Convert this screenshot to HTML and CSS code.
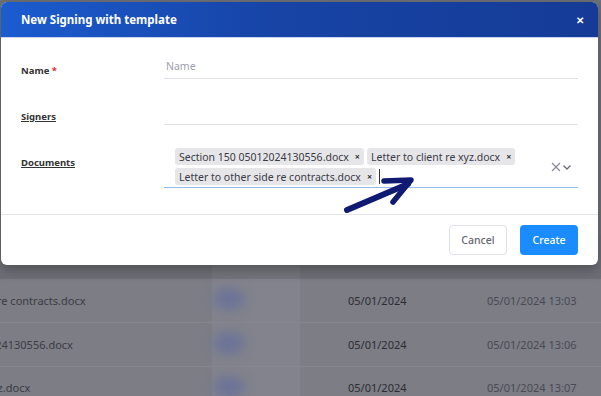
FILE: index.html
```html
<!DOCTYPE html>
<html lang="en">

<head>
    <meta charset="UTF-8">
    <title>New Signing with template</title>
    <link rel="stylesheet" href="styles.css">
</head>

<body>

    <!-- page behind the dialog -->
    <div class="backdrop">
        <div class="table">
            <div class="row head">
                <div class="cell"></div>
                <div class="cell blur"></div>
                <div class="cell"></div>
                <div class="cell"></div>
            </div>
            <div class="row">
                <div class="cell name">Letter to other side re contracts.docx</div>
                <div class="cell blur"><span class="blob"></span></div>
                <div class="cell date">05/01/2024</div>
                <div class="cell stamp">05/01/2024 13:03</div>
            </div>
            <div class="row">
                <div class="cell name">Section 150 05012024130556.docx</div>
                <div class="cell blur"><span class="blob"></span></div>
                <div class="cell date">05/01/2024</div>
                <div class="cell stamp">05/01/2024 13:06</div>
            </div>
            <div class="row">
                <div class="cell name">Letter to client re xyz.docx</div>
                <div class="cell blur"><span class="blob"></span></div>
                <div class="cell date">05/01/2024</div>
                <div class="cell stamp">05/01/2024 13:07</div>
            </div>
        </div>
    </div>

    <!-- Modal -->
    <div class="modal">
        <div class="modal-header">
            <h2>New Signing with template</h2>
            <span class="close">&#x2715;</span>
        </div>

        <div class="modal-body">
            <div class="field">
                <label>Name <span class="req">*</span></label>
                <div class="control">
                    <input type="text" placeholder="Name">
                </div>
            </div>

            <div class="field">
                <label class="link">Signers</label>
                <div class="control"></div>
            </div>

            <div class="field">
                <label class="link">Documents</label>
                <div class="control select">
                    <div class="chips">
                        <span class="chip">Section 150 05012024130556.docx <b>&times;</b></span>
                        <span class="chip">Letter to client re xyz.docx <b>&times;</b></span>
                        <span class="chip">Letter to other side re contracts.docx <b>&times;</b></span>
                        <span class="caret"></span>
                    </div>
                    <div class="select-icons">
                        <svg width="10" height="10" viewBox="0 0 10 10"><path d="M1 1L9 9M9 1L1 9" stroke="#8a8a95" stroke-width="1.1" fill="none"/></svg>
                        <svg width="10" height="10" viewBox="0 0 10 10"><path d="M1.5 3.5L5 7L8.5 3.5" stroke="#6b6b78" stroke-width="1.3" fill="none"/></svg>
                    </div>
                </div>
            </div>

            <svg class="arrow" width="80" height="46" viewBox="0 0 80 46">
                <path d="M7 36L68 10" stroke="#0f1a72" stroke-width="6" stroke-linecap="round" fill="none"/>
                <path d="M44 7L71 6L53 28" stroke="#0f1a72" stroke-width="5.5" stroke-linecap="round" stroke-linejoin="round" fill="none"/>
            </svg>
        </div>

        <div class="modal-footer">
            <button class="btn cancel">Cancel</button>
            <button class="btn create">Create</button>
        </div>
    </div>

</body>

</html>
```

FILE: styles.css
```css
* {
    margin: 0;
    padding: 0;
    box-sizing: border-box;
}

body {
    font-family: 'Noto Sans', 'Liberation Sans', sans-serif;
    background-color: #707178;
    width: 601px;
    height: 396px;
    overflow: hidden;
    position: relative;
}

/* Page behind */
.backdrop {
    padding-top: 235px;
    margin-left: -105px;
}

.row {
    display: grid;
    grid-template-columns: 317px 136px 139px 1fr;
    height: 44px;
    align-items: center;
    background-color: #7c7d85;
    border-bottom: 1px solid #86878e;
    font-size: 11px;
}

.row:last-child {
    height: 42px;
}

.row.head {
    background-color: #6e6f76;
    border-bottom: none;
}

.cell {
    height: 100%;
    display: flex;
    align-items: center;
    white-space: nowrap;
}

.name {
    color: #3b3c44;
}

.blur {
    position: relative;
    background-color: #82838c;
    width: 88px;
}

.head .blur {
    background-color: #74757c;
}

.blob {
    position: absolute;
    left: 2px;
    top: 10px;
    width: 30px;
    height: 20px;
    border-radius: 10px;
    background-color: #6a7298;
    filter: blur(6px);
}

.date {
    color: #2c2d33;
}

.stamp {
    color: #494a52;
}

/* Modal */
.modal {
    position: absolute;
    left: 1px;
    top: 2px;
    width: 597px;
    background-color: #fff;
    border-radius: 6px;
    box-shadow: 0 4px 14px rgba(0, 0, 0, 0.3);
}

.modal-header {
    height: 36px;
    border-radius: 6px 6px 0 0;
    background: linear-gradient(90deg, #1b5ccf 0%, #1744a6 45%, #153b96 100%);
    display: flex;
    align-items: center;
    justify-content: space-between;
    padding: 0 14px 0 20px;
    border-bottom: 1px solid #c9d4ee;
}

.modal-header h2 {
    color: #fff;
    font-size: 11.5px;
    font-weight: 700;
}

.close {
    color: #fff;
    font-size: 10px;
    font-weight: 700;
}

.modal-body {
    position: relative;
    padding: 17px 20px 26px 20px;
    display: flex;
    flex-direction: column;
    gap: 22px;
    border-bottom: 1px solid #e4e4ee;
}

.field {
    display: flex;
    align-items: flex-start;
}

.field label {
    width: 143px;
    padding-top: 9px;
    font-size: 9.5px;
    font-weight: 700;
    color: #333;
    line-height: 14px;
}

.field label.link {
    text-decoration: underline;
}

.req {
    color: #e03030;
}

.control {
    flex: 1;
    height: 24px;
    border-bottom: 1px solid #e0e0ea;
}

.control input {
    display: block;
    width: 100%;
    height: 22px;
    border: none;
    outline: none;
    background: transparent;
    padding-left: 2px;
    font-family: inherit;
    font-size: 10.5px;
    color: #333;
}

.control input::placeholder {
    color: #a0a0b2;
}

.control.select {
    height: auto;
    display: flex;
    align-items: center;
    padding: 1px 0 2px 11px;
    border-bottom: 1.5px solid #8fbcee;
}

.chips {
    flex: 1;
    display: flex;
    flex-wrap: wrap;
    gap: 3px;
    padding-right: 30px;
}

.chip {
    display: inline-flex;
    align-items: center;
    height: 17px;
    padding: 0 4px;
    background-color: #e6e6e9;
    border-radius: 3px;
    font-size: 10.5px;
    color: #3a3a44;
    white-space: nowrap;
}

.chip b {
    margin-left: 6px;
    font-size: 9px;
    color: #333;
}

.caret {
    width: 1px;
    height: 15px;
    margin-top: 1px;
    background-color: #333;
}

.select-icons {
    display: flex;
    align-items: center;
    gap: 1px;
    margin-right: 6px;
}

.arrow {
    position: absolute;
    left: 339px;
    top: 136px;
}

.modal-footer {
    display: flex;
    justify-content: flex-end;
    gap: 13px;
    padding: 10px 20px 10px 20px;
}

.btn {
    height: 30px;
    width: 58px;
    border-radius: 4px;
    font-family: inherit;
    font-size: 10.5px;
    font-weight: 500;
    cursor: pointer;
}

.cancel {
    background-color: #fff;
    border: 1px solid #dedfea;
    color: #666770;
}

.create {
    background-color: #1a8cff;
    border: none;
    color: #fff;
}
```
